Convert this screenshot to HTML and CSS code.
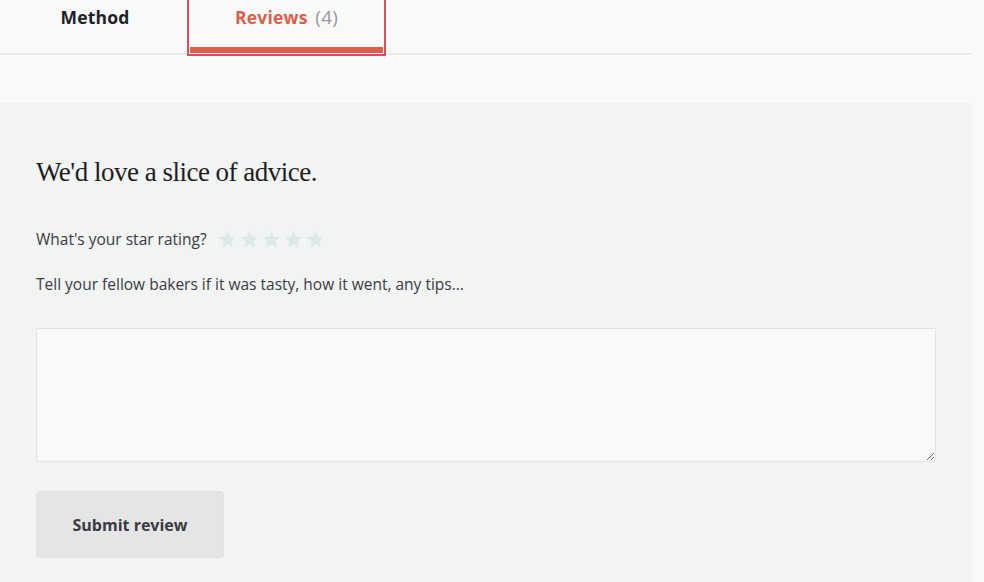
FILE: index.html
```html
<!DOCTYPE html>
<html>
<head>
<meta charset="utf-8">
<link rel="stylesheet" href="styles.css">
</head>
<body>
<div class="page">
  <nav class="tabs">
    <a class="tab">Method</a>
    <a class="tab active">Reviews <span class="count">(4)</span></a>
  </nav>
  <section class="panel">
    <h2 class="title">We'd love a slice of advice.</h2>
    <div class="rating">
      <span class="label">What's your star rating?</span>
      <span class="stars">
        <svg viewBox="0 0 24 24"><path d="M12 1.5l3.1 7.1 7.6.7-5.8 5.1 1.8 7.6L12 18l-6.7 4 1.8-7.6-5.8-5.1 7.6-.7z"/></svg>
        <svg viewBox="0 0 24 24"><path d="M12 1.5l3.1 7.1 7.6.7-5.8 5.1 1.8 7.6L12 18l-6.7 4 1.8-7.6-5.8-5.1 7.6-.7z"/></svg>
        <svg viewBox="0 0 24 24"><path d="M12 1.5l3.1 7.1 7.6.7-5.8 5.1 1.8 7.6L12 18l-6.7 4 1.8-7.6-5.8-5.1 7.6-.7z"/></svg>
        <svg viewBox="0 0 24 24"><path d="M12 1.5l3.1 7.1 7.6.7-5.8 5.1 1.8 7.6L12 18l-6.7 4 1.8-7.6-5.8-5.1 7.6-.7z"/></svg>
        <svg viewBox="0 0 24 24"><path d="M12 1.5l3.1 7.1 7.6.7-5.8 5.1 1.8 7.6L12 18l-6.7 4 1.8-7.6-5.8-5.1 7.6-.7z"/></svg>
      </span>
    </div>
    <p class="hint">Tell your fellow bakers if it was tasty, how it went, any tips...</p>
    <textarea class="review"></textarea>
    <button class="submit">Submit review</button>
  </section>
</div>
</body>
</html>
```

FILE: styles.css
```css
html, body {
  margin: 0;
  padding: 0;
  background: #f8f9f9;
  font-family: "Open Sans", "Liberation Sans", sans-serif;
  color: #2b2b33;
}
.page {
  width: 972px;
}
.tabs {
  display: flex;
  height: 53px;
  border-bottom: 2px solid #e9eaea;
  box-sizing: content-box;
}
.tab {
  font-size: 17.5px;
  font-weight: 700;
  color: #1f1f29;
  padding: 4px 0 0;
  height: 43px;
  line-height: 26px;
  text-align: center;
  letter-spacing: 0.2px;
}
.tab:first-child {
  width: 190px;
}
.tab.active {
  width: 193px;
  color: #d9604a;
  border-bottom: 6px solid #d9604a;
  outline: 2px solid #e04a5e;
  outline-offset: 1px;
  margin-top: -4px;
  padding-top: 8px;
  box-sizing: content-box;
}
.count {
  color: #9a9a9a;
  font-weight: 400;
  font-size: 19px;
  margin-left: 3px;
}
.panel {
  margin-top: 48px;
  background: #f2f3f3;
  padding: 52px 36px 40px;
  min-height: 480px;
  box-sizing: border-box;
}
.title {
  margin: 0 0 38px;
  font-family: "Liberation Serif", serif;
  font-weight: 400;
  font-size: 27px;
  line-height: 34px;
  letter-spacing: -0.5px;
  color: #1e1e22;
}
.rating {
  display: flex;
  align-items: center;
  gap: 11px;
  height: 24px;
}
.label, .hint {
  font-size: 15.5px;
  color: #3b3b45;
}
.stars {
  display: flex;
  gap: 3px;
}
.stars svg {
  width: 19px;
  height: 19px;
  fill: #dde8ea;
}
.hint {
  margin: 21px 0 32px;
  line-height: 24px;
}
.review {
  display: block;
  width: 900px;
  height: 134px;
  box-sizing: border-box;
  background: #f8f9fa;
  border: 1px solid #e2e3e3;
  border-radius: 2px;
  margin: 0 0 29px;
  font-family: inherit;
}
.submit {
  width: 188px;
  height: 67px;
  background: #e5e5e5;
  border: 1px solid #e2e2e2;
  border-radius: 4px;
  font-family: "Open Sans", "Liberation Sans", sans-serif;
  font-size: 16px;
  font-weight: 700;
  color: #3a3a44;
}
```
